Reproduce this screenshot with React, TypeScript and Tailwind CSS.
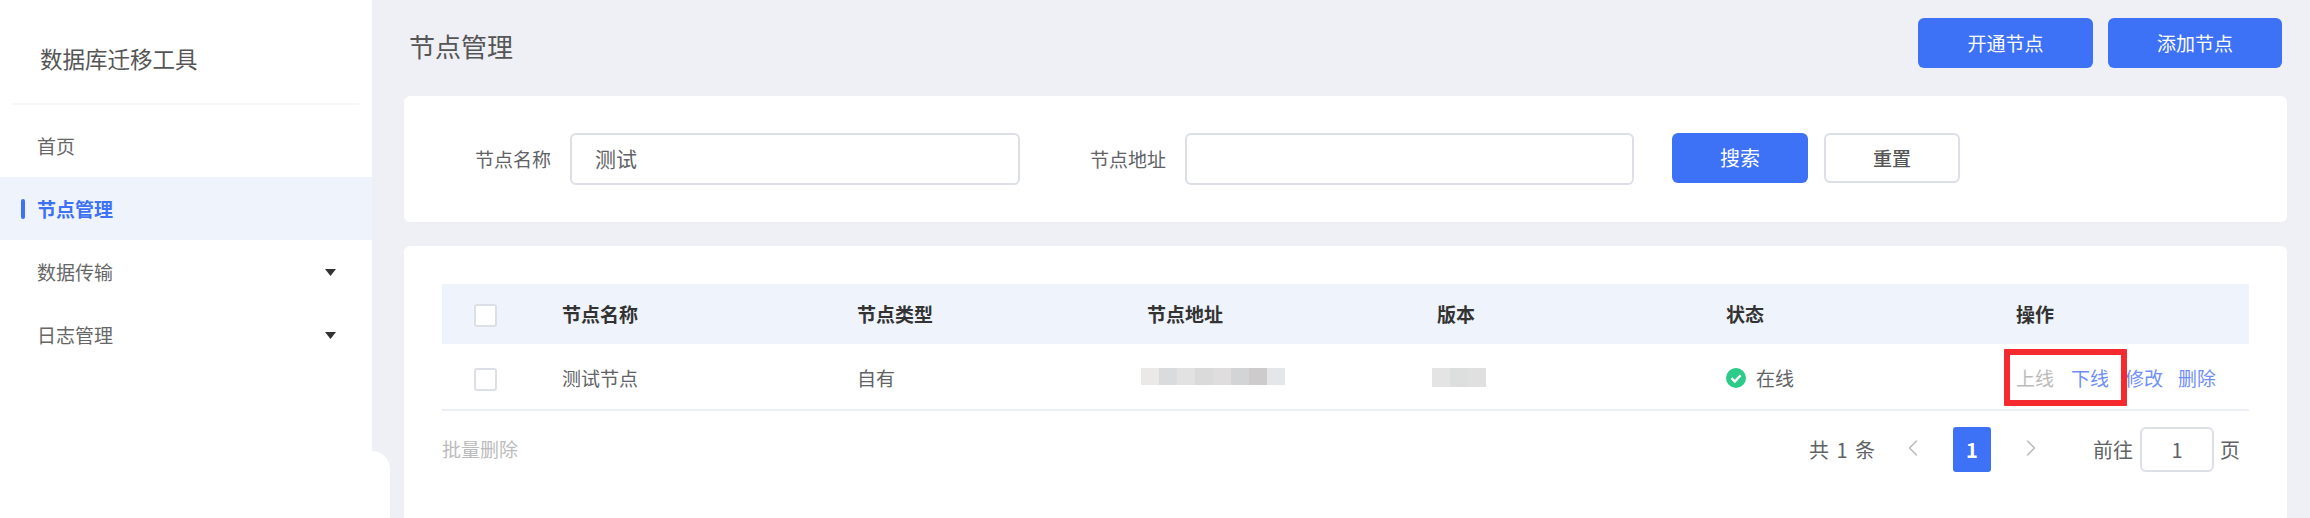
import { ChevronLeft, ChevronRight } from "lucide-react";

const font = "font-['Noto_Sans_CJK_SC','Noto_Sans',sans-serif]";

const tableColumns = "grid grid-cols-[120px_295px_290px_290px_289px_290px_1fr] items-center";

function Caret() {
  return (
    <svg width="11" height="7" viewBox="0 0 11 7" className="ml-auto mr-[36px]">
      <path d="M0 0H11L5.5 7Z" fill="#333" />
    </svg>
  );
}

function Sidebar() {
  return (
    <aside className="w-[372px] shrink-0 bg-white">
      <div className="mx-[13px] flex h-[105px] items-center border-b-2 border-[#f7f7f9] pb-[10px] pl-[27px] pt-[24px] text-[22.5px] leading-none text-[#555]">
        数据库迁移工具
      </div>
      <nav className="pt-[9px] text-[19px] text-[#666]">
        <div className="flex h-[63px] items-center pl-[37px] pt-[2px]">首页</div>
        <div className="flex h-[63px] items-center bg-[#eff3fc] pl-[21px] pt-[2px] font-bold text-[#3d72f6]">
          <span className="-mt-[2px] mr-[12px] h-[20px] w-[4px] rounded-sm bg-[#3d72f6]" />
          节点管理
        </div>
        <div className="flex h-[63px] items-center pl-[37px] pt-[2px]">
          数据传输
          <Caret />
        </div>
        <div className="flex h-[63px] items-center pl-[37px] pt-[2px]">
          日志管理
          <Caret />
        </div>
      </nav>
    </aside>
  );
}

function Checkbox() {
  return <span className="ml-[32px] mt-[2px] block h-[23px] w-[23px] rounded-[3px] border-2 border-[#dcdfe6] bg-white" />;
}

function SearchCard() {
  return (
    <div className="flex h-[126px] items-start rounded-md bg-white pl-[71px] pt-[37px] text-[19px] text-[#606266]">
      <label className="flex h-[52px] w-[76px] items-center whitespace-nowrap">节点名称</label>
      <div className="ml-[19px] flex h-[52px] w-[450px] items-center rounded-md border-2 border-[#dcdfe6] pl-[23px] text-[21px]">
        测试
      </div>
      <label className="ml-[70px] flex h-[52px] w-[76px] items-center whitespace-nowrap">节点地址</label>
      <div className="ml-[19px] h-[52px] w-[449px] rounded-md border-2 border-[#dcdfe6]" />
      <button className="ml-[38px] h-[50px] w-[136px] rounded-md bg-[#3d72f6] text-[20px] text-white">搜索</button>
      <button className="ml-[16px] h-[50px] w-[136px] rounded-md border-2 border-[#dcdfe6] text-[19px] font-medium text-[#555]">
        重置
      </button>
    </div>
  );
}

function TableCard() {
  const address = ["#ebe8e8", "#d9dbdc", "#e2e2e2", "#dadada", "#dfdddd", "#d3d4d6", "#cdcbcc", "#e5e6e9"];
  const version = ["#e4e4e4", "#dddfde", "#e0e0e0"];

  return (
    <div className="mt-[24px] h-[272px] rounded-t-md bg-white px-[38px] pt-[38px] text-[19px] text-[#606266]">
      <div className={`${tableColumns} h-[60px] bg-[#eff3fc] font-bold text-[#333]`}>
        <Checkbox />
        <span>节点名称</span>
        <span>节点类型</span>
        <span>节点地址</span>
        <span>版本</span>
        <span>状态</span>
        <span>操作</span>
      </div>
      <div className={`${tableColumns} relative h-[67px] border-b-2 border-[#ebeef5] pt-[3px]`}>
        <Checkbox />
        <span>测试节点</span>
        <span>自有</span>
        <span className="-ml-[6px] mb-[3px] flex h-[17px]">
          {address.map((c, i) => (
            <i key={i} className="block h-full w-[18px]" style={{ backgroundColor: c }} />
          ))}
        </span>
        <span className="-ml-[5px] mb-[1px] flex h-[19px]">
          {version.map((c, i) => (
            <i key={i} className="block h-full w-[18px]" style={{ backgroundColor: c }} />
          ))}
        </span>
        <span className="flex items-center">
          <svg width="20" height="20" viewBox="0 0 20 20" className="mr-[10px]">
            <circle cx="10" cy="10" r="10" fill="#2ccb8a" />
            <path d="M5.5 10.2 8.8 13.5 14.6 7.4" fill="none" stroke="#fff" strokeWidth="2.4" />
          </svg>
          在线
        </span>
        <span className="flex whitespace-nowrap text-[#6f8ff8]">
          <span className="text-[#bbbbbb]">上线</span>
          <span className="ml-[17px]">下线</span>
          <span className="ml-[16px]">修改</span>
          <span className="ml-[15px]">删除</span>
        </span>
        <div className="absolute left-[1562px] top-[5px] h-[57px] w-[123px] rounded-[1px] border-[6px] border-[#f52a2e]" />
      </div>
      <div className="mt-[16px] flex h-[45px] items-center justify-between">
        <span className="text-[#bbbbbb]">批量删除</span>
        <div className="flex items-center pr-[9px] text-[20px]">
          <span className="whitespace-nowrap [word-spacing:3px]">共 1 条</span>
          <ChevronLeft size={28} strokeWidth={1.2} color="#b4b7bd" className="-mt-[3px] ml-[24px]" />
          <span className="ml-[26px] flex h-[45px] w-[38px] items-center justify-center rounded-[3px] bg-[#3d72f6] font-bold text-white">
            1
          </span>
          <ChevronRight size={28} strokeWidth={1.2} color="#b4b7bd" className="-mt-[3px] ml-[26px]" />
          <span className="ml-[48px] whitespace-nowrap">前往</span>
          <span className="ml-[7px] flex h-[45px] w-[74px] items-center justify-center rounded-md border-2 border-[#dcdfe6]">
            1
          </span>
          <span className="ml-[6px]">页</span>
        </div>
      </div>
    </div>
  );
}

export default function App() {
  return (
    <div className={`${font} relative flex h-[518px] w-[2310px] overflow-hidden bg-[#eff0f5]`}>
      <Sidebar />
      <main className="flex-1 pl-[32px] pr-[23px]">
        <header className="flex h-[96px] items-start justify-between pl-[5px] pr-[5px] pt-[18px]">
          <h1 className="flex h-[54px] items-center text-[26px] font-normal text-[#555]">节点管理</h1>
          <div className="flex gap-[15px] text-[19px] text-white">
            <button className="h-[50px] w-[175px] rounded-md bg-[#3d72f6]">开通节点</button>
            <button className="h-[50px] w-[174px] rounded-md bg-[#3d72f6]">添加节点</button>
          </div>
        </header>
        <SearchCard />
        <TableCard />
      </main>
      <div className="absolute left-0 top-[451px] h-[67px] w-[390px] rounded-tr-[18px] bg-white" />
    </div>
  );
}
